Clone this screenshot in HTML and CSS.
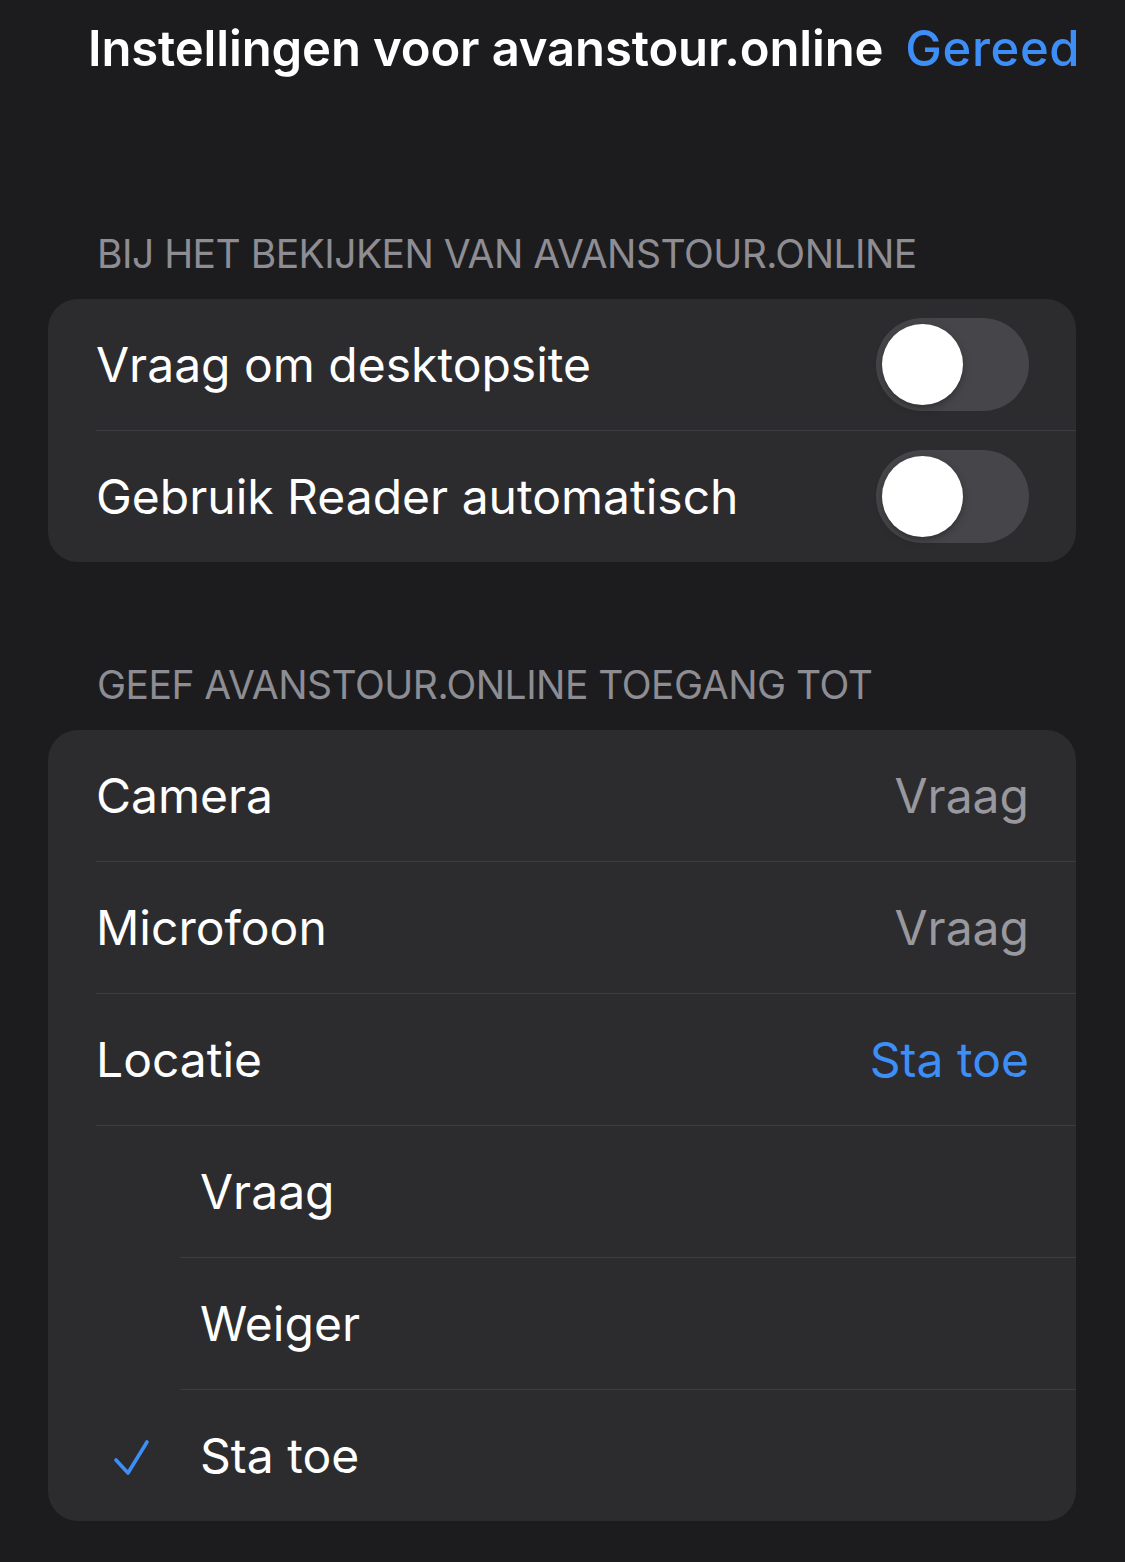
FILE: index.html
```html
<!DOCTYPE html>
<html lang="nl">
<head>
<meta charset="utf-8">
<title>Instellingen voor avanstour.online</title>
<link rel="stylesheet" href="styles.css">
</head>
<body>
<header class="topbar">
  <h1 class="title">Instellingen voor avanstour.online</h1>
  <span class="done">Gereed</span>
</header>

<section class="group group-first">
  <h2 class="group-header">BIJ HET BEKIJKEN VAN AVANSTOUR.ONLINE</h2>
  <div class="card">
    <div class="row">
      <div class="row-body">
        <span class="label">Vraag om desktopsite</span>
        <span class="toggle"><span class="knob"></span></span>
      </div>
    </div>
    <div class="row">
      <div class="row-body last">
        <span class="label">Gebruik Reader automatisch</span>
        <span class="toggle"><span class="knob"></span></span>
      </div>
    </div>
  </div>
</section>

<section class="group">
  <h2 class="group-header">GEEF AVANSTOUR.ONLINE TOEGANG TOT</h2>
  <div class="card">
    <div class="row">
      <div class="row-body">
        <span class="label">Camera</span>
        <span class="value">Vraag</span>
      </div>
    </div>
    <div class="row">
      <div class="row-body">
        <span class="label">Microfoon</span>
        <span class="value">Vraag</span>
      </div>
    </div>
    <div class="row">
      <div class="row-body">
        <span class="label">Locatie</span>
        <span class="value value-blue">Sta toe</span>
      </div>
    </div>
    <div class="row sub">
      <span class="check-col"></span>
      <div class="row-body sub-body">
        <span class="label">Vraag</span>
      </div>
    </div>
    <div class="row sub">
      <span class="check-col"></span>
      <div class="row-body sub-body">
        <span class="label">Weiger</span>
      </div>
    </div>
    <div class="row sub">
      <span class="check-col">
        <svg class="check" width="40" height="40" viewBox="0 0 40 40" aria-hidden="true">
          <path d="M4 22 L16 35 L35 4" fill="none" stroke="#3e8ef7" stroke-width="3.6" stroke-linecap="round" stroke-linejoin="round"/>
        </svg>
      </span>
      <div class="row-body sub-body last">
        <span class="label">Sta toe</span>
      </div>
    </div>
  </div>
</section>
</body>
</html>
```

FILE: styles.css
```css
html, body {
  margin: 0;
  padding: 0;
}

body {
  background: #1c1c1e;
  font-family: Inter, "Noto Sans", "Liberation Sans", sans-serif;
  color: #ffffff;
  width: 1125px;
  min-height: 1562px;
}

.topbar {
  display: flex;
  align-items: center;
  gap: 22px;
  padding: 19px 0 0 88px;
  height: 60px;
}

.title {
  margin: 0;
  font-size: 49px;
  line-height: 60px;
  font-weight: 600;
  color: #ffffff;
  letter-spacing: -0.13px;
}

.done {
  font-size: 49px;
  line-height: 60px;
  font-weight: 500;
  color: #3e8ef7;
  letter-spacing: 0.6px;
}

.group {
  padding: 0 49px 0 48px;
}

.group-first {
  margin-top: 151px;
}

.group + .group {
  margin-top: 99px;
}

.group-header {
  margin: 0 0 21px 49px;
  font-size: 39px;
  line-height: 48px;
  font-weight: 400;
  color: #8d8d93;
  letter-spacing: -0.52px;
}

.card {
  background: #2c2c2e;
  border-radius: 30px;
  overflow: hidden;
}

.row {
  display: flex;
  padding-left: 48px;
}

.row.sub {
  padding-left: 0;
}

.row-body {
  flex: 1;
  display: flex;
  align-items: center;
  justify-content: space-between;
  height: 131px;
  padding-right: 47px;
  border-bottom: 1px solid #3d3d41;
}

.row-body.last {
  border-bottom: none;
}

.sub-body {
  padding-left: 20px;
}

.label {
  font-size: 48px;
  line-height: 60px;
  font-weight: 400;
  color: #ffffff;
}

.value {
  font-size: 48px;
  line-height: 60px;
  color: #98989e;
}

.value-blue {
  color: #3e8ef7;
}

.check-col {
  width: 132px;
  flex: none;
  display: flex;
  align-items: center;
  padding-left: 64px;
  box-sizing: border-box;
}

.check {
  display: block;
  margin-top: 4px;
}

.toggle {
  position: relative;
  width: 153px;
  height: 93px;
  border-radius: 47px;
  background: #46464a;
  flex: none;
}

.knob {
  position: absolute;
  left: 6px;
  top: 6px;
  width: 81px;
  height: 81px;
  border-radius: 50%;
  background: #ffffff;
  box-shadow: 0 3px 8px rgba(0, 0, 0, 0.25), 0 3px 1px rgba(0, 0, 0, 0.06);
}
```
